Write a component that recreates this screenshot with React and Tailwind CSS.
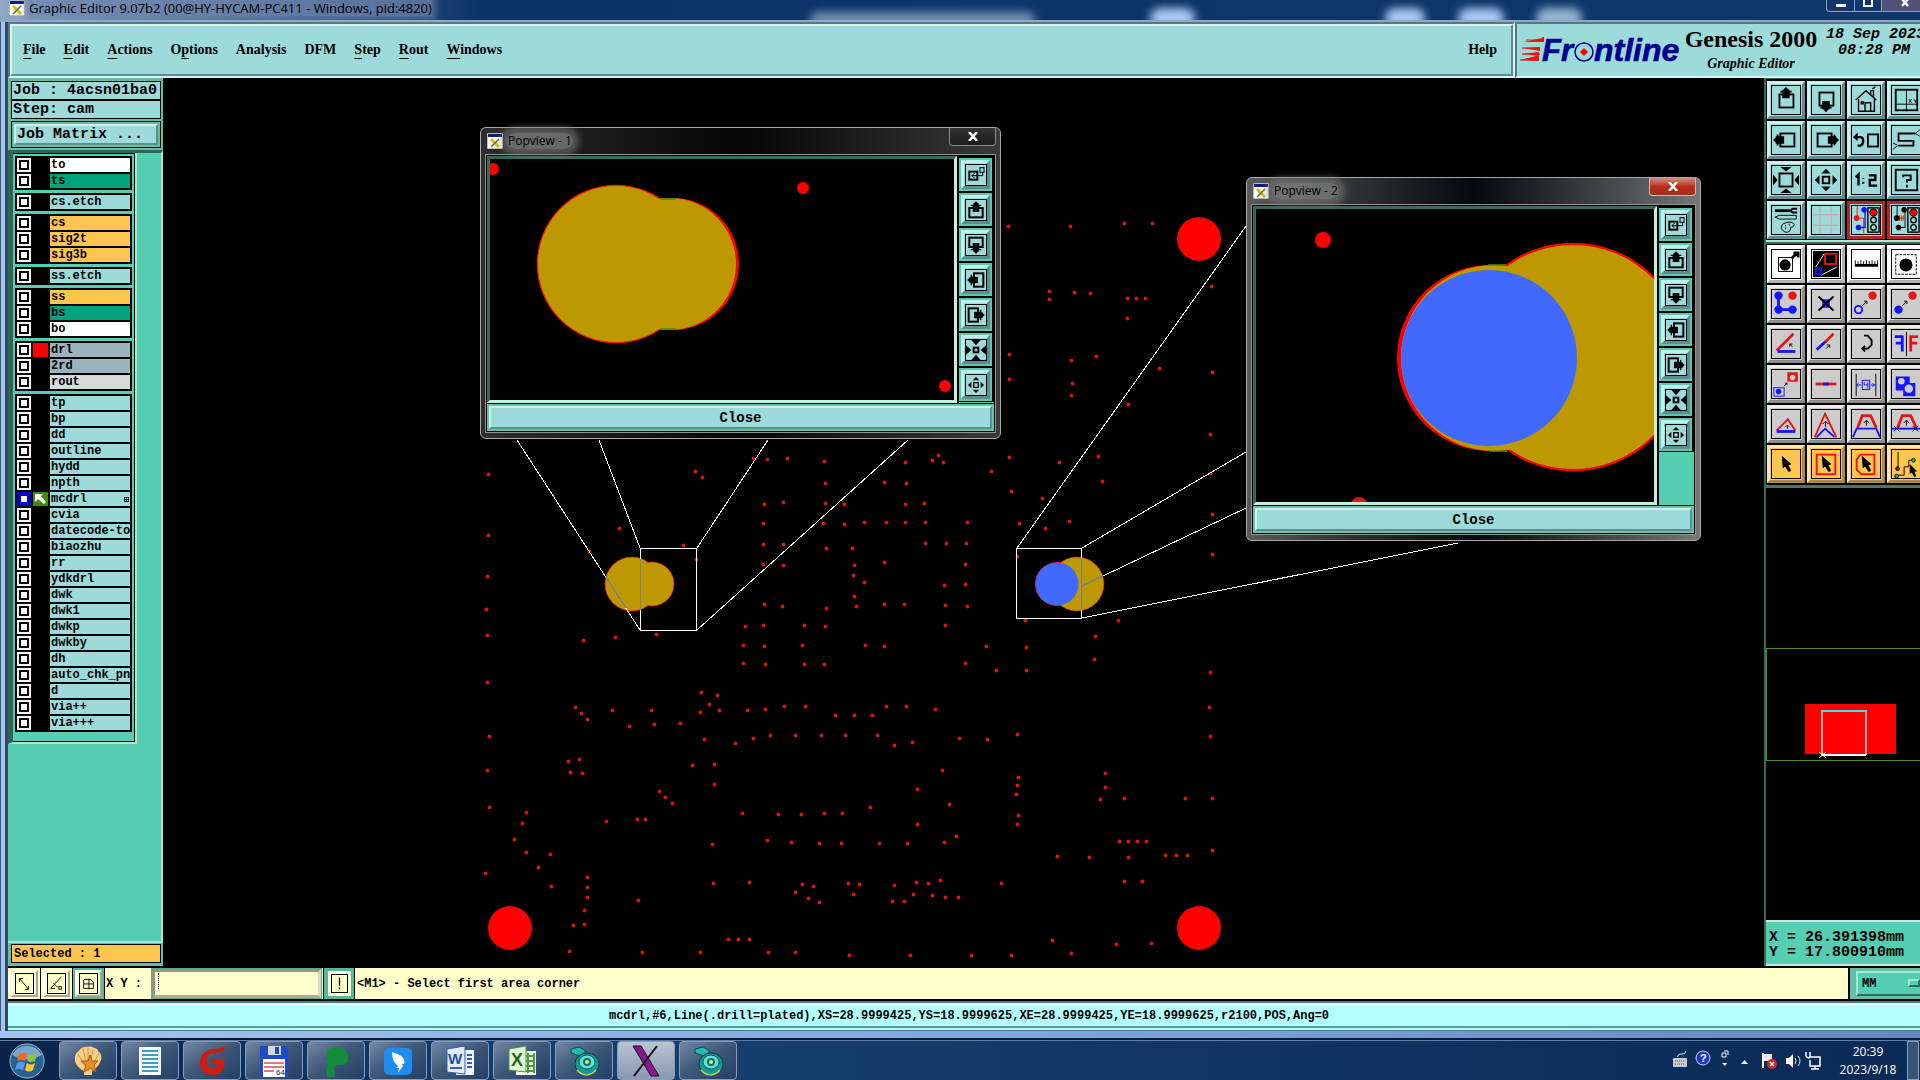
import React, { useState } from 'react'

const layerGroups = [
  [
    { name: 'to', tone: 'bg-white' },
    { name: 'ts', tone: 'bg-[#00a37c]' },
  ],
  [{ name: 'cs.etch', tone: 'bg-[#9cdbda]' }],
  [
    { name: 'cs', tone: 'bg-[#ffc64f]' },
    { name: 'sig2t', tone: 'bg-[#ffc64f]' },
    { name: 'sig3b', tone: 'bg-[#ffc64f]' },
  ],
  [{ name: 'ss.etch', tone: 'bg-[#9cdbda]' }],
  [
    { name: 'ss', tone: 'bg-[#ffc64f]' },
    { name: 'bs', tone: 'bg-[#00a37c]' },
    { name: 'bo', tone: 'bg-white' },
  ],
  [
    { name: 'drl', tone: 'bg-[#9ab4bd]', color: true },
    { name: '2rd', tone: 'bg-[#9ab4bd]' },
    { name: 'rout', tone: 'bg-[#d9d9d9]' },
  ],
  [
    'tp', 'bp', 'dd', 'outline', 'hydd', 'npth', 'mcdrl', 'cvia', 'datecode-to', 'biaozhu', 'rr',
    'ydkdrl', 'dwk', 'dwk1', 'dwkp', 'dwkby', 'dh', 'auto_chk_pnl', 'd', 'via++', 'via+++',
  ].map((name) => ({ name, tone: 'bg-[#9cdbda]', active: name === 'mcdrl' })),
]

// label plus the index of the mnemonic letter, -1 for none
const menus = [
  ['File', 0], ['Edit', 0], ['Actions', 0], ['Options', 1], ['Analysis', -1],
  ['DFM', -1], ['Step', 0], ['Rout', 0], ['Windows', 0],
]

// drill hits on the board
const drills = [
  [488, 473], [488, 533], [487, 574], [486, 606], [487, 632], [487, 678], [489, 731], [487, 764], [489, 801], [485, 865],
  [583, 636], [615, 634], [656, 631], [619, 526], [589, 549], [683, 543], [696, 557], [695, 470], [702, 476],
  [753, 458], [767, 459], [787, 458], [824, 461], [825, 482], [825, 502], [844, 503], [764, 503], [783, 501],
  [763, 522], [823, 522], [844, 523], [864, 521], [763, 542], [783, 542], [826, 546], [852, 546], [763, 562], [783, 563],
  [854, 563], [853, 573], [864, 579], [854, 593], [764, 601], [782, 603], [826, 605], [856, 603], [745, 623], [763, 622],
  [804, 622], [825, 623], [743, 641], [764, 642], [802, 641], [865, 641], [743, 659], [765, 660], [804, 660], [824, 660],
  [701, 688], [717, 690], [709, 699], [700, 707], [719, 705], [747, 705], [765, 704], [784, 701], [805, 701],
  [835, 710], [854, 710], [575, 702], [581, 708], [587, 714], [612, 705], [651, 705], [629, 721], [654, 719], [680, 718],
  [704, 734], [735, 738], [753, 733], [770, 730], [795, 730], [821, 730], [845, 730], [568, 755], [579, 753], [570, 766],
  [582, 767], [692, 759], [714, 758], [714, 778], [659, 785], [665, 791], [672, 797], [606, 814], [637, 812], [645, 812],
  [742, 806], [778, 807], [801, 807], [824, 806], [842, 806], [526, 805], [522, 816], [514, 832], [526, 845], [550, 847],
  [538, 859], [551, 878], [587, 869], [587, 879], [587, 889], [584, 902], [584, 915], [573, 916], [638, 892],
  [712, 837], [767, 833], [791, 835], [819, 836], [841, 836], [713, 875], [749, 874], [802, 876], [813, 878], [795, 884],
  [808, 890], [819, 894], [848, 875], [859, 876], [853, 886], [728, 930], [738, 930], [749, 930], [569, 942], [642, 943],
  [700, 943], [768, 943], [795, 943], [849, 946],
  [905, 462], [932, 460], [938, 455], [943, 462], [991, 470], [1009, 457], [1059, 462], [1098, 456], [1102, 480],
  [1011, 490], [1042, 497], [884, 481], [906, 482], [905, 503], [924, 502], [886, 521], [905, 521], [925, 521], [967, 521],
  [1019, 522], [1045, 526], [1069, 520], [925, 541], [946, 541], [966, 541], [884, 560], [965, 562], [944, 582], [965, 581],
  [884, 601], [904, 601], [945, 602], [967, 603], [945, 622], [884, 642], [986, 642], [1026, 643], [965, 659], [996, 666],
  [1026, 666], [1017, 554], [1025, 617], [1118, 617], [1095, 633], [1094, 655], [1210, 472], [1212, 513], [1212, 552],
  [1210, 668], [1209, 702], [1210, 731], [886, 701], [906, 701], [935, 704], [872, 710], [877, 730], [894, 740], [912, 737],
  [959, 733], [987, 734], [1017, 729], [942, 764], [917, 783], [870, 801], [949, 798], [917, 817], [1018, 771], [1017, 779],
  [1016, 788], [1018, 808], [1017, 817], [1105, 767], [1105, 781], [1100, 793], [1124, 792], [1185, 792], [1212, 792],
  [879, 836], [907, 836], [944, 835], [956, 829], [1057, 849], [1089, 850], [1119, 834], [1128, 834], [1137, 834], [1146, 834],
  [1128, 850], [1165, 848], [1176, 848], [1187, 848], [1212, 843], [1124, 873], [1142, 873], [894, 877], [916, 874],
  [928, 875], [940, 872], [913, 886], [932, 887], [945, 889], [958, 889], [892, 893], [904, 893], [1001, 875],
  [910, 946], [971, 946], [1011, 946], [1052, 931], [1071, 944], [1116, 935], [1151, 934],
  [1008, 226], [1070, 226], [1124, 223], [1152, 223], [1211, 286], [1049, 291], [1049, 299], [1074, 292], [1090, 293],
  [1127, 298], [1136, 298], [1145, 298], [1127, 318], [1009, 354], [1009, 379], [1071, 360], [1096, 356], [1072, 383],
  [1071, 395], [1159, 368], [1128, 404], [1212, 372], [1210, 434],
]

// the lower part of the board is plotted with a slightly larger pitch
const plotY = (y) => Math.round(y > 440 ? 440 + (y - 440) * 1.018 : y)

const B = '#1414ff'
const R = '#e81414'

// bold frame with an arrow leaving it, turned for the four directions
const PanArrow = ({ turn }) => (
  <g transform={turn}>
    <rect x="5" y="12" width="20" height="14" fill="none" stroke="#000" strokeWidth="3" />
    <path d="M15 2l3 3h1v2h4v2h-3v9H10V9H7V7h4V5h1z" />
  </g>
)

// 30x30 tool drawings
const icons = {
  up: (
    <g>
      <rect x="8" y="9" width="15" height="14" fill="none" stroke="#000" strokeWidth="2" />
      <path d="M15 1l3 3h1v1h2v2h-2v6h-8V7H9V5h2V4h1z" />
    </g>
  ),
  down: (
    <g>
      <rect x="8" y="7" width="15" height="14" fill="none" stroke="#000" strokeWidth="2" />
      <path d="M15 28l-3-3h-1v-1H9v-2h2v-6h8v6h2v2h-2v1h-1z" />
    </g>
  ),
  left: (
    <g>
      <rect x="9" y="8" width="15" height="14" fill="none" stroke="#000" strokeWidth="2" />
      <path d="M1 15l3-3v-1h1V9h2v2h6v8H7v2H5v-2H4v-1z" />
    </g>
  ),
  right: (
    <g>
      <rect x="6" y="8" width="15" height="14" fill="none" stroke="#000" strokeWidth="2" />
      <path d="M29 15l-3-3v-1h-1V9h-2v2h-6v8h6v2h2v-2h1v-1z" />
    </g>
  ),
  panUp: <PanArrow />,
  panDown: <PanArrow turn="rotate(180 15 15)" />,
  panLeft: <PanArrow turn="rotate(-90 15 15)" />,
  panRight: <PanArrow turn="rotate(90 15 15)" />,
  home: (
    <path d="M4 15L15 5l11 10M7 14v13h17V14M14 27v-9h6v9M10 17h2v2h-2zM20 9V5h3v7M22 3l3-2" fill="none" stroke="#000" strokeWidth="1.5" />
  ),
  panes: (
    <g>
      <rect x="4" y="4" width="23" height="22" fill="none" stroke="#000" strokeWidth="2" />
      <path d="M15.500 4v22M4 19.500h23" stroke="#000" />
      <path d="M18 14l3 4m0-4l-3 4M23 14l2 2 2-2m-2 2v2" stroke="#000" fill="none" />
    </g>
  ),
  undo: (
    <g>
      <rect x="17" y="9" width="11" height="13" fill="none" stroke="#000" strokeWidth="2" />
      <path d="M3 12h6q3 0 3 4t-3 5H6" fill="none" stroke="#000" strokeWidth="2.500" />
      <path d="M1 12l5-5v9z" />
    </g>
  ),
  snake: (
    <g fill="none" stroke="#000">
      <path d="M6 21h17v-5H7V8h18" strokeWidth="2" />
      <path d="M1 18l5 3-5 4M30 4l-5 4 5 3" />
    </g>
  ),
  zoomout: (
    <g>
      <rect x="8" y="8" width="14" height="14" fill="none" stroke="#000" strokeWidth="2" />
      <path d="M9 1h12l-6 5zM9 29h12l-6-5zM1 9v12l5-6zM29 9v12l-5-6z" />
    </g>
  ),
  zoomin: (
    <g>
      <rect x="11.500" y="11.500" width="7" height="7" fill="none" stroke="#000" strokeWidth="2" />
      <path d="M15 3l5 5H10zM15 27l5-5H10zM3 15l5-5v10zM27 15l-5-5v10z" />
    </g>
  ),
  squeeze: (
    <g>
      <rect x="11.500" y="11.500" width="7" height="7" fill="none" stroke="#000" strokeWidth="3" />
      <path d="M8 0h14l-7 8zM8 30h14l-7-8zM0 8v14l8-7zM30 8v14l-8-7z" />
    </g>
  ),
  detach: (
    <g fill="none" stroke="#000">
      <rect x="5" y="10" width="12" height="12" strokeWidth="3" />
      <rect x="21" y="4" width="6" height="7" strokeWidth="1.500" />
      <path d="M25 11v5H9m4-4l-4 4 4 4" strokeWidth="1.500" />
    </g>
  ),
  ratio: <path d="M4 12l3-3v12M12 13v1m0 3v2M18 10h7v5h-6v6h8" fill="none" stroke="#000" strokeWidth="2.500" />,
  help: (
    <g fill="none" stroke="#000" strokeWidth="2">
      <rect x="4" y="4" width="23" height="22" />
      <path d="M12 12v-2h8v5h-4v3M16 20v3" />
    </g>
  ),
  tools: (
    <g fill="none" stroke="#000">
      <path d="M3 5h17" strokeWidth="3" />
      <path d="M27 3h-5l-2 2 2 2h5" strokeWidth="2" />
      <path d="M3 12l5-2h18v4H8z" />
      <path d="M12 19q9-4 12 1-1 3-4 3 0 6-6 5-7-4-2-9z" />
      <path d="M14 21h1m3-1h1m-5 4h1" strokeWidth="2" />
    </g>
  ),
  grid: <path d="M8.500 1v28M20.500 1v28M1 9.500h28M1 20.500h28" stroke="#d69ba6" fill="none" />,
  netOn: (
    <g>
      <path d="M5.500 0v13h7V29" stroke={R} fill="none" />
      <path d="M14 4v19H8" stroke={B} fill="none" strokeWidth="1.500" />
      <circle cx="5" cy="13" r="3" fill={R} /><circle cx="13" cy="4" r="3" fill={B} /><circle cx="7" cy="23" r="3" fill={B} />
      <rect x="17" y="2" width="12" height="26" fill="none" stroke="#000" strokeWidth="1.500" />
      <circle cx="23" cy="7" r="4" fill="#f00" stroke="#000" /><circle cx="23" cy="15" r="3" fill="none" stroke="#000" strokeWidth="1.500" />
      <circle cx="23" cy="23" r="3" fill="none" stroke="#000" strokeWidth="1.500" />
    </g>
  ),
  netOff: (
    <g>
      <path d="M5.500 0v13M14 4v19H8" stroke="#000" fill="none" />
      <path d="M6 13h7m-5-3v6m2-6v6m2-6v6" stroke={R} fill="none" />
      <circle cx="5" cy="13" r="3" /><circle cx="13" cy="4" r="3" /><circle cx="7" cy="23" r="3" />
      <rect x="17" y="2" width="12" height="26" fill="none" stroke="#000" strokeWidth="1.500" />
      <circle cx="23" cy="7" r="4" fill="#f00" stroke="#000" /><circle cx="23" cy="15" r="3" fill="none" stroke="#000" strokeWidth="1.500" />
      <circle cx="23" cy="23" r="3" fill="none" stroke="#000" strokeWidth="1.500" />
    </g>
  ),
  pick: (
    <g>
      <rect x="7" y="8" width="15" height="15" fill="none" stroke="#000" />
      <circle cx="14" cy="16" r="6" />
      <path d="M21 9l5-5m-3-1h5v5" stroke="#000" fill="none" strokeWidth="3" />
    </g>
  ),
  popview: (
    <g>
      <rect x="1" y="1" width="28" height="28" />
      <path d="M4 18L13 4M10 27l17-9" stroke="#fff" />
      <rect x="14" y="4" width="12" height="11" fill="none" stroke="#f01414" strokeWidth="2" />
      <rect x="4" y="20" width="6" height="6" fill="none" stroke={B} strokeWidth="2" />
    </g>
  ),
  ruler: <path d="M3 18h25v-7h-1v4h-2v-3h-1v3h-2v-4h-1v4h-2v-3h-1v3h-2v-4h-1v4h-2v-3h-1v3h-2v-4H9v4H7v-3H6v3H4v-4H3z" />,
  dashedPad: (
    <g>
      <rect x="4" y="5" width="22" height="21" fill="none" stroke="#000" strokeDasharray="3 1" />
      <circle cx="15" cy="16" r="7" />
    </g>
  ),
  links: (
    <g>
      <path d="M7 6v15h15" stroke={B} strokeWidth="3" fill="none" />
      <circle cx="7" cy="6" r="4.500" fill={B} /><circle cx="7" cy="21" r="4.500" fill={B} /><circle cx="22" cy="21" r="4.500" fill={B} />
      <circle cx="22" cy="6" r="4.500" fill={R} />
    </g>
  ),
  cross: (
    <g>
      <rect x="11" y="10" width="8" height="9" fill={B} />
      <path d="M7 7l16 15M23 7L7 22" stroke="#000" strokeWidth="2" />
    </g>
  ),
  copyPad: (
    <g>
      <circle cx="7" cy="21" r="4" fill="none" stroke={B} strokeWidth="2" /><circle cx="22" cy="6" r="4.500" fill={R} />
      <path d="M11 17l5-5m-3 0h3v3" stroke="#000" fill="none" />
    </g>
  ),
  movePad: (
    <g>
      <circle cx="7" cy="21" r="4.500" fill={B} /><circle cx="22" cy="6" r="4.500" fill={R} />
      <path d="M11 17l5-5m-3 0h3v3" stroke="#000" fill="none" />
    </g>
  ),
  angle: (
    <g fill="none">
      <path d="M5 22L23 4" stroke={R} strokeWidth="3" /><path d="M6 23h19" stroke={B} strokeWidth="3" />
      <path d="M22 18l-3-3m0 3v-3h3" stroke="#000" />
    </g>
  ),
  extend: (
    <g fill="none">
      <path d="M5 21L15 12" stroke={B} strokeWidth="3" /><path d="M14 13l9-9" stroke={R} strokeWidth="3" />
      <path d="M15 20l4-4m-3 0h3v3" stroke="#000" />
    </g>
  ),
  rotate: <path d="M13 6h4l4 5v5l-4 4h-6m3-3l-3 3 3 3" stroke="#000" strokeWidth="2" fill="none" />,
  mirror: (
    <g fill="none">
      <path d="M3 7h8v16M4 14h7" stroke={B} strokeWidth="3" /><path d="M15.500 2v26" stroke="#000" />
      <path d="M28 7h-8v16M27 14h-7" stroke={R} strokeWidth="3" />
    </g>
  ),
  swap: (
    <g fill="none">
      <rect x="2" y="19" width="11" height="9" stroke={B} /><circle cx="7" cy="23" r="3" fill={B} />
      <rect x="17" y="3" width="10" height="9" fill={R} stroke={R} /><circle cx="22" cy="8" r="3" fill="#ccc" />
      <path d="M13 17l3-3m-2 0h2v2" stroke="#000" />
    </g>
  ),
  bar: (
    <g>
      <path d="M4 15h22" stroke={R} strokeWidth="3" /><path d="M12 15h6" stroke={B} strokeWidth="3" />
    </g>
  ),
  dimension: (
    <g fill="none">
      <path d="M4.500 4v24M25.500 4v24" stroke="#000" />
      <path d="M5 16h5m-3-2l-2 2 2 2M20 16h5m-3-2l2 2-2 2M13 13v3h4v4m0-7v3" stroke={B} />
      <rect x="11" y="11" width="8" height="10" stroke={B} />
    </g>
  ),
  gears: (
    <g fill={B}>
      <path d="M4 7h15v7h6v14H12v-6H4z" />
      <circle cx="10" cy="12" r="3.500" fill="#ccc" /><circle cx="18" cy="20" r="4.500" fill="#ccc" />
    </g>
  ),
  tri: (
    <g fill="none">
      <path d="M5 22L17 10l8 12" stroke={R} strokeWidth="2" /><path d="M5 23h20" stroke={B} strokeWidth="3" />
      <path d="M16.500 20v-4m-2 2l2-2 2 2" stroke="#000" />
    </g>
  ),
  peak: (
    <g fill="none">
      <path d="M3 29L14 4l12 25" stroke={R} strokeWidth="2" /><path d="M5 29l9-9 10 9" stroke={B} strokeWidth="2" />
      <path d="M14.500 18v-6m-3 3l3-3 3 3" stroke="#000" />
    </g>
  ),
  trap: (
    <g fill="none">
      <path d="M6 19l5-13h9l6 13" stroke={R} strokeWidth="3" /><path d="M1 29l4-9h21l4 9" stroke={B} strokeWidth="2" />
      <path d="M15.500 17v-6m-3 3l3-3 3 3" stroke="#000" />
    </g>
  ),
  trapCut: (
    <g fill="none">
      <path d="M6 19l5-13h9l6 13" stroke={R} strokeWidth="3" /><path d="M0 20h30" stroke={B} strokeWidth="2" />
      <path d="M15.500 17v-6m-3 3l3-3 3 3M2 17l6 6m0-6l-6 6M22 17l6 6m0-6l-6 6" stroke="#000" />
    </g>
  ),
  select: <path d="M11 7l9 8-3 1 3 6-2 1-4-6-2 2z" stroke="#000" />,
  selectBox: (
    <g>
      <rect x="5" y="5" width="20" height="21" fill="none" stroke={R} strokeWidth="2" />
      <path d="M11 7l9 8-3 1 3 6-2 1-4-6-2 2z" stroke="#000" />
    </g>
  ),
  selectPoly: (
    <g>
      <path d="M9 5h15v21H10l-5-5V10z" fill="none" stroke={R} strokeWidth="2" />
      <path d="M11 7l9 8-3 1 3 6-2 1-4-6-2 2z" stroke="#000" />
    </g>
  ),
  selectNet: (
    <g>
      <path d="M6.500 2v18M6 27h7v-9h5V11h5" fill="none" stroke="#000" />
      <circle cx="6" cy="20" r="2" fill="#b01010" stroke="#000" /><circle cx="5" cy="28" r="2" fill="#1fd01f" stroke="#000" />
      <circle cx="23" cy="11" r="2" fill="#1fd01f" stroke="#000" />
      <path d="M19 15l8 8h-3l2 5-2 1-3-5-2 2z" />
    </g>
  ),
}

const tones = {
  cyan: 'bg-[#9cdbda] border-t-[#cdf0ee] border-l-[#cdf0ee] border-r-[#5c8d90] border-b-[#5c8d90]',
  red: 'bg-[#9cdbda] border-[#b22428]',
  white: 'bg-white border-t-white border-l-white border-r-[#b4b4b4] border-b-[#b4b4b4]',
  gray: 'bg-[#cccccc] border-t-[#ececec] border-l-[#ececec] border-r-[#8c8c8c] border-b-[#8c8c8c]',
  orange: 'bg-[#ffc64f] border-t-[#ffe6b0] border-l-[#ffe6b0] border-r-[#b08a3c] border-b-[#b08a3c]',
}

const viewTools = [
  ['up', 'cyan'], ['down', 'cyan'], ['home', 'cyan'], ['panes', 'cyan'],
  ['left', 'cyan'], ['right', 'cyan'], ['undo', 'cyan'], ['snake', 'cyan'],
  ['zoomout', 'cyan'], ['zoomin', 'cyan'], ['ratio', 'cyan'], ['help', 'cyan'],
  ['tools', 'cyan'], ['grid', 'cyan'], ['netOn', 'red'], ['netOff', 'red'],
]

const editTools = [
  ['pick', 'white'], ['popview', 'white'], ['ruler', 'white'], ['dashedPad', 'white'],
  ['links', 'gray'], ['cross', 'gray'], ['copyPad', 'gray'], ['movePad', 'gray'],
  ['angle', 'gray'], ['extend', 'gray'], ['rotate', 'gray'], ['mirror', 'gray'],
  ['swap', 'gray'], ['bar', 'gray'], ['dimension', 'gray'], ['gears', 'gray'],
  ['tri', 'gray'], ['peak', 'gray'], ['trap', 'gray'], ['trapCut', 'gray'],
  ['select', 'orange'], ['selectBox', 'orange'], ['selectPoly', 'orange'], ['selectNet', 'orange'],
]

const ToolGrid = ({ tools }) => (
  <div className="grid grid-cols-[repeat(4,38px)] gap-[2px]">
    {tools.map(([name, tone]) => (
      <button
        key={name}
        type="button"
        aria-label={name}
        className={`flex h-[38px] w-[38px] items-center justify-center border-3 ${tones[tone]}`}
      >
        <svg viewBox="0 0 30 30" className="h-[30px] w-[30px] shrink-0 border border-black">
          {icons[name]}
        </svg>
      </button>
    ))}
  </div>
)

const XIcon = () => (
  <svg viewBox="0 0 16 16" className="h-4 w-4 shrink-0">
    <rect width="16" height="16" fill="#fff" stroke="#777" />
    <rect x="1" y="1" width="14" height="3" fill="#101a80" />
    <path d="M4 6l8 8" stroke="#c9c21a" strokeWidth="3" />
    <path d="M12 6l-8 8" stroke="#6b6b20" strokeWidth="1.500" />
  </svg>
)

const popTools = ['detach', 'panUp', 'panDown', 'panLeft', 'panRight', 'squeeze', 'zoomin']

const Popview = ({ title, className, frame, closeStyle, viewBox, children }) => (
  <section
    className={`absolute flex flex-col rounded-md border border-[#a8a8a8] px-1 pb-[5px] ${frame} ${className}`}
    aria-label={title}
  >
    <header className="relative flex h-[26px] items-center gap-1 pl-[2px] font-['Open_Sans',sans-serif] text-xs text-black">
      <XIcon />
      <span className="rounded-full bg-[#7b7b7b]/80 px-px shadow-[0_0_6px_6px_rgba(123,123,123,0.6)]">
        {title}
      </span>
      <button
        type="button"
        aria-label={`Close ${title}`}
        className={`absolute top-0 right-0 flex h-[18px] w-[47px] items-center justify-center rounded-b border border-t-0 ${closeStyle}`}
      >
        <svg viewBox="0 0 10 9" className="h-[9px] w-[10px]">
          <path d="M1 0l8 9M9 0L1 9" stroke="#fff" strokeWidth="2.500" />
        </svg>
      </button>
    </header>
    <div className="flex flex-1 flex-col gap-px border border-[#8c9494] bg-black p-px">
      <div className="flex flex-1 gap-[2px]">
        <div className="min-w-0 flex-1 border-3 border-t-[#356a60] border-r-[#c4efe2] border-b-[#c4efe2] border-l-[#356a60]">
          <svg viewBox={viewBox} className="block h-full w-full">
            {children}
          </svg>
        </div>
        <div className="flex w-[35px] flex-col bg-[#55ceb1]">
          <div className="flex flex-col gap-[2px] bg-black pt-[2px] pb-px">
            {popTools.map((name) => (
              <button
                key={name}
                type="button"
                aria-label={name}
                className="flex h-[33px] w-[33px] items-center justify-center border-2 border-[#62c4ab] bg-[#9cdbda]"
              >
                <span className="flex h-[29px] w-[29px] items-center justify-center border-3 border-t-[#b8f5ee] border-r-[#5c8d90] border-b-[#5c8d90] border-l-[#b8f5ee]">
                  <svg viewBox="0 0 30 30" className="h-[22px] w-[22px] shrink-0 border border-black">
                    {icons[name]}
                  </svg>
                </span>
              </button>
            ))}
          </div>
        </div>
      </div>
      <button
        type="button"
        className="h-[27px] border-2 border-[#62c4ab] bg-[#9cdbda] font-['Liberation_Mono',monospace] text-sm font-bold text-black"
      >
        <span className="flex h-[23px] items-center justify-center border-2 border-t-[#cdf0ee] border-r-[#5c8d90] border-b-[#5c8d90] border-l-[#cdf0ee]">
          Close
        </span>
      </button>
    </div>
  </section>
)

const Workspace = () => (
  <main className="relative min-w-0 flex-1 overflow-hidden bg-black">
    <svg viewBox="163 78 1601 888" className="block h-full w-full">
      {[[1199, 239], [510, 928], [1199, 928]].map(([x, y]) => (
        <circle key={`${x}-${y}`} cx={x} cy={y} r="22" fill="#ff0000" />
      ))}
      {drills.map(([x, y]) => (
        <circle key={`${x}-${y}`} cx={x + 0.5} cy={plotY(y) + 0.5} r="1.9" fill="#dc1414" />
      ))}

      <circle cx="632" cy="584" r="27" fill="#bd9800" stroke="#ff1800" strokeWidth="0.7" />
      <circle cx="652" cy="584" r="22" fill="#bd9800" stroke="#ff1800" strokeWidth="0.7" />
      <circle cx="632" cy="584" r="26" fill="#bd9800" />
      <circle cx="1057" cy="584" r="22" fill="#ff0000" />
      <circle cx="1077" cy="584" r="27" fill="#bd9800" stroke="#ff1800" strokeWidth="0.5" />
      <circle cx="1057" cy="584" r="21.500" fill="#4169ff" />

      <g fill="none" stroke="#fff" shapeRendering="crispEdges">
        <rect x="640.5" y="548.5" width="56" height="82" />
        <path d="M517 440L640 630M599 440L640 548M768 440L697 548M908 440L697 630" />
        <rect x="1016.5" y="548.5" width="65" height="70" />
        <path d="M1017 548L1246 226M1082 548L1246 452M1082 586L1246 508M1082 618L1458 543" />
      </g>
      {/* the wires turn gray where they cross copper */}
      <g fill="none" stroke="#7d8088" strokeWidth="1.500" shapeRendering="crispEdges">
        <path d="M640.500 559v51M606 577l20 31M1081.500 558v52M1082 586l21-10" />
      </g>
    </svg>

    <Popview
      title="Popview - 1"
      className="top-[49px] left-[317px] h-[312px] w-[521px]"
      frame="bg-linear-to-r from-[#2e2e2e] via-[#060606] to-[#3a3a3a]"
      closeStyle="border-[#8a8a8a] bg-linear-to-b from-[#333333] to-[#1c1c1c]"
      viewBox="490 159 464 241"
    >
      <circle cx="493" cy="169" r="6" fill="#ff0000" />
      <circle cx="803" cy="188" r="6" fill="#ff0000" />
      <circle cx="945" cy="386" r="6" fill="#ff0000" />
      <circle cx="673" cy="264" r="66" fill="#ff0000" />
      <circle cx="616" cy="264" r="78.500" fill="#bd9800" stroke="#f01800" strokeWidth="1.500" />
      <circle cx="670" cy="264" r="66" fill="#bd9800" />
      <circle cx="616" cy="264" r="78" fill="#bd9800" />
      <path d="M661 199h15M660 329h16" stroke="#3c8c00" strokeWidth="1.500" />
    </Popview>

    <Popview
      title="Popview - 2"
      className="top-[99px] left-[1083px] h-[364px] w-[455px]"
      frame="bg-linear-to-r from-[#5a5a5a] via-[#060a10] to-[#777777]"
      closeStyle="border-[#e0b0a8] bg-linear-to-b from-[#d08a80] via-[#b82c18] to-[#a03020]"
      viewBox="1256 209 398 293"
    >
      <circle cx="1323" cy="240" r="8" fill="#ff0000" />
      <circle cx="1359" cy="505" r="8" fill="#dc1414" />
      <circle cx="1490" cy="358" r="93" fill="#ff0000" />
      <circle cx="1573" cy="357" r="113" fill="#bd9800" stroke="#ff0000" strokeWidth="2.500" />
      <circle cx="1494" cy="358" r="93" fill="#bd9800" />
      <circle cx="1573" cy="357" r="112" fill="#bd9800" />
      <path d="M1488 265h18M1489 451h18" stroke="#5c9000" strokeWidth="1.500" />
      <circle cx="1489" cy="358" r="88" fill="#4169ff" />
    </Popview>
  </main>
)

const LayerRow = ({ layer }) => (
  <div className="flex h-4 items-center gap-px">
    <input
      id={`layer-${layer.name}`}
      type="checkbox"
      className={
        layer.active
          ? 'h-[14px] w-[14px] shrink-0 appearance-none border-4 border-[#0000c8] bg-white'
          : 'h-[14px] w-[14px] shrink-0 appearance-none border-2 border-white bg-white shadow-[inset_0_0_0_2px_#000]'
      }
    />
    <span className={`ml-px h-[14px] w-[15px] shrink-0 ${layer.color ? 'bg-[#ff0000]' : layer.active ? 'bg-[#3f8a10]' : 'bg-black'}`}>
      {layer.active && (
        <svg viewBox="0 0 14 14" className="h-[14px] w-[14px]">
          <path d="M2 2h8L8 4l5 6-2 2-6-5-3 3z" fill="#fff" />
        </svg>
      )}
    </span>
    <label
      htmlFor={`layer-${layer.name}`}
      className={`ml-px flex h-[14px] min-w-0 flex-1 items-center justify-between overflow-hidden pl-px font-['Liberation_Mono',monospace] text-xs leading-[14px] font-bold whitespace-nowrap ${layer.tone}`}
    >
      {layer.name}
      {layer.active && (
        <svg viewBox="0 0 5 5" className="mr-px h-[5px] w-[5px] shrink-0">
          <path d="M0 .5h5M0 2.500h5M0 4.500h5M.5 0v5M2.500 0v5M4.500 0v5" stroke="#000" strokeWidth="0.8" />
        </svg>
      )}
    </label>
  </div>
)

const LeftPanel = () => (
  <aside className="flex w-[155px] shrink-0 flex-col bg-[#62bfa5] font-['Liberation_Mono',monospace] font-bold text-black">
    <div className="flex flex-col pt-[3px] pr-[2px] pb-[2px] pl-[3px] text-[15px] leading-[17px]">
      <div className="flex h-[19px] items-end border border-black bg-[#9cdbda] pl-px whitespace-pre">Job : 4acsn01ba0</div>
      <div className="flex h-[19px] items-end border border-black bg-[#9cdbda] pl-px whitespace-pre">Step: cam</div>
      <div className="mt-[2px] border border-black p-[2px]">
        <button type="button" className="flex h-[21px] w-full items-center border-2 border-t-[#cdf0ee] border-r-[#5c8d90] border-b-[#5c8d90] border-l-[#cdf0ee] bg-[#9cdbda] pl-px">
          Job Matrix ...
        </button>
      </div>
    </div>
    <div className="flex-1 border-t-3 border-r-2 border-b-2 border-t-[#2f6358] border-r-[#a5e8d4] border-b-[#a5e8d4] bg-[#55ceb1]">
      <div className="w-[129px] border-r-2 border-b-2 border-l-[5px] border-r-[#a5e8d4] border-b-[#a5e8d4] border-l-[#2f6358]">
        <div className="flex flex-col gap-[3px] border-t border-r border-b border-black pt-[2px] pr-[2px] pb-[9px] pl-[2px]">
          {layerGroups.map((group) => (
            <div key={group[0].name} className="bg-black px-[2px] py-px">
              {group.map((layer) => (
                <LayerRow key={layer.name} layer={layer} />
              ))}
            </div>
          ))}
        </div>
      </div>
    </div>
    <div className="pt-px pr-[2px] pb-[3px] pl-[3px]">
      <div className="flex h-[19px] items-center border border-black bg-[#ffc64f] pl-[2px] text-xs whitespace-pre">Selected : 1</div>
    </div>
  </aside>
)

const RightPanel = () => (
  <aside className="flex w-[156px] shrink-0 flex-col overflow-hidden border-l-2 border-[#356a60] bg-black">
    <div className="border-t border-[#2f6358] pt-[2px] pl-px">
      <ToolGrid tools={viewTools} />
    </div>
    <div className="mt-px h-[2px] shrink-0 bg-[#a5e8d4]" />
    <div className="border-t-2 border-[#5a5a5a] pt-px pl-px">
      <ToolGrid tools={editTools} />
    </div>
    <div className="mt-[2px] h-[3px] shrink-0 bg-[#557068]" />
    <div className="min-h-0 flex-1">
      <svg viewBox="1766 488 154 432" className="block h-full w-full">
        <rect x="1766.5" y="648.5" width="170" height="112" fill="none" stroke="#4f8a1e" />
        <rect x="1805" y="704" width="91" height="50" fill="#ff0000" />
        <path d="M1822 755v-44M1866 755v-44" stroke="#aaa" strokeWidth="2" />
        <path d="M1821 711h46" stroke="#40e0e0" strokeWidth="2" />
        <path d="M1822 755h44" stroke="#fff" strokeWidth="2" />
        <path d="M1819 752l7 6M1826 752l-7 6" stroke="#fff" />
      </svg>
    </div>
    <div className="h-[46px] shrink-0 border-t-2 border-b-2 border-[#b8eedf] bg-[#55ceb1] pt-2 pl-[3px] font-['Liberation_Mono',monospace] text-[15px] leading-[15px] font-bold whitespace-pre">
      <div>X = 26.391398mm</div>
      <div>Y = 17.800910mm</div>
    </div>
  </aside>
)

const Header = () => (
  <div className="flex h-[56px] shrink-0 bg-[#9cdbda] font-['Liberation_Serif',serif] text-sm font-bold text-black">
    <div className="flex-1 border-2 border-t-[#56787e] border-r-[#d8f5f3] border-b-[#d8f5f3] border-l-[#56787e]">
      <nav className="flex h-full items-center gap-[18px] border-2 border-t-[#d8f5f3] border-r-[#5c8d90] border-b-[#5c8d90] border-l-[#d8f5f3] pr-[14px] pl-[11px]">
        {menus.map(([name, key]) => (
          <button key={name} type="button" className="whitespace-nowrap">
            {key < 0 ? name : (
              <>
                {name.slice(0, key)}
                <span className="underline underline-offset-4">{name[key]}</span>
                {name.slice(key + 1)}
              </>
            )}
          </button>
        ))}
        <button type="button" className="ml-auto">Help</button>
      </nav>
    </div>
    <div className="flex w-[405px] shrink-0 overflow-hidden border-y-2 border-l-2 border-t-[#56787e] border-b-[#d8f5f3] border-l-[#56787e] pl-[3px]">
      <svg viewBox="0 0 162 52" className="h-[52px] w-[162px] shrink-0">
        <g fill="#e81414">
          <path d="M4 18l18-4v-1h-4 6v5zM2 24l18-1 0 4zM2 30l17-2v4zM0 36l16-4h3v5z" />
          <path d="M6 16h17M2 24h18M2 30h18M0 36h18" stroke="#e81414" fill="none" />
        </g>
        <text x="22" y="37" fontFamily="Liberation Sans, Arial, sans-serif" fontWeight="bold" fontStyle="italic" fontSize="31" fill="#000090" stroke="#000090" strokeWidth="0.6">Fr</text>
        <circle cx="64" cy="28" r="9" fill="none" stroke="#000090" strokeWidth="1.500" />
        <path d="M64 24l4 4-4 4-4-4z" fill="#f00" />
        <text x="74" y="37" fontFamily="Liberation Sans, Arial, sans-serif" fontWeight="bold" fontStyle="italic" fontSize="32" fill="#000090" stroke="#000090" strokeWidth="0.6">ntline</text>
      </svg>
      <div className="flex w-[138px] shrink-0 flex-col items-center">
        <div className="text-2xl leading-[30px] whitespace-nowrap">Genesis 2000</div>
        <div className="text-sm leading-5 italic">Graphic Editor</div>
      </div>
      <div className="shrink-0 pt-[3px] pl-[6px] font-['Liberation_Mono',monospace] text-[15px] leading-4 whitespace-pre italic">
        <div>18 Sep 2023</div>
        <div className="pl-3">08:28 PM</div>
      </div>
    </div>
  </div>
)

const TitleBar = () => (
  <header className="relative flex h-[22px] shrink-0 items-start overflow-hidden border-b-2 border-[#8fa9cc] bg-linear-to-r from-[#8fa6c6] via-[#0d3468] via-25% to-[#10376b] pl-[9px]">
    <div className="absolute -bottom-2 left-[810px] h-4 w-[225px] rounded-full bg-[#9db2cf] opacity-70 blur-xs" />
    <div className="absolute -bottom-2 left-[1150px] h-5 w-[45px] rounded-full bg-[#a9c6ef] blur-xs" />
    <div className="absolute -bottom-2 left-[1385px] h-5 w-[40px] rounded-full bg-[#a9c6ef] blur-xs" />
    <div className="absolute -bottom-2 left-[1458px] h-5 w-[46px] rounded-full bg-[#a9c6ef] blur-xs" />
    <div className="absolute -bottom-2 left-[1536px] h-5 w-[46px] rounded-full bg-[#93b6cf] blur-xs" />
    <XIcon />
    <h1 className="relative ml-1 bg-[#6f86ac]/70 font-['Open_Sans',sans-serif] text-[13px] leading-4 whitespace-nowrap text-black shadow-[0_0_6px_4px_rgba(111,134,172,0.6)]">
      Graphic Editor 9.07b2 (00@HY-HYCAM-PC411 - Windows, pid:4820)
    </h1>
    <div className="relative ml-auto flex h-3 text-white">
      <button type="button" aria-label="Minimize" className="flex w-[29px] items-center justify-center rounded-bl border border-t-0 border-[#8ea2bd]">
        <svg viewBox="0 0 10 4" className="h-1 w-[10px]"><rect width="10" height="3" fill="#fff" /></svg>
      </button>
      <button type="button" aria-label="Maximize" className="flex w-[27px] items-start justify-center border-r border-b border-[#8ea2bd]">
        <svg viewBox="0 0 10 7" className="h-[7px] w-[10px]"><path d="M1 0v6h8V0" fill="none" stroke="#fff" strokeWidth="2" /></svg>
      </button>
      <button type="button" aria-label="Close" className="flex w-[38px] items-start justify-center border-b border-[#8ea2bd] bg-[#7f5f80]/60 pl-2">
        <svg viewBox="0 0 10 7" className="h-[7px] w-[10px]"><path d="M2 6l6-7M8 6L2-1" stroke="#fff" strokeWidth="2.500" /></svg>
      </button>
    </div>
  </header>
)

const CommandBar = () => {
  const [xy, setXy] = useState('')
  const modes = [
    ['Snap line', 'M4 5l10 12M4 5h4M4 5v4M14 17v-4M14 17h-4'],
    ['Snap angle', 'M3 16L15 3M3 16h5m-2-6l5 5m1-1h3v3h-3z'],
    ['Snap grid', 'M5 6h7l3 3v7H4V7zM10 5v12M4 11h11'],
  ]
  return (
    <form
      className="flex h-[35px] shrink-0 items-stretch border-y-2 border-black bg-[#ffffcc] pl-px font-['Liberation_Mono',monospace] text-xs font-bold text-black"
      onSubmit={(e) => e.preventDefault()}
    >
      {modes.map(([name, path], i) => (
        <button
          key={name}
          type="button"
          aria-label={name}
          className={`flex w-8 items-center justify-center border-r border-black ${i === 2 ? 'bg-[#55b89e]' : ''}`}
        >
          <span className="flex h-[27px] w-[27px] items-center justify-center border-2 border-t-[#fffff0] border-r-[#a8a888] border-b-[#a8a888] border-l-[#fffff0] bg-[#ffffcc]">
            <svg viewBox="0 0 19 21" className="h-[21px] w-[19px] shrink-0 border border-black">
              <path d={path} fill="none" stroke="#000" />
            </svg>
          </span>
        </button>
      ))}
      <label htmlFor="xy" className="flex w-[47px] items-center pl-px whitespace-pre">X Y :</label>
      <div className="relative my-px flex outline outline-[#5fa890]">
        <input
          id="xy"
          value={xy}
          onChange={(e) => setXy(e.target.value)}
          className="w-[169px] border-3 border-t-[#96967c] border-r-[#dcdcb4] border-b-[#b0b090] border-l-[#96967c] bg-[#ffffcc] px-1"
        />
        <span className="pointer-events-none absolute top-[4px] left-[6px] h-4 border-l border-dotted border-black" />
      </div>
      <button type="submit" aria-label="Enter" className="ml-[2px] flex w-8 items-center justify-center border-x border-black bg-[#55b89e]">
        <span className="flex h-[25px] w-[23px] items-center justify-center bg-[#ffffcc]">
          <svg viewBox="0 0 17 19" className="h-[19px] w-[17px] border border-black">
            <path d="M8.500 3v9M8.500 14v2" stroke="#000" strokeWidth="1.500" />
          </svg>
        </span>
      </button>
      <output className="flex flex-1 items-center pl-[2px] whitespace-pre">&lt;M1&gt; - Select first area corner</output>
      <div className="relative w-[72px] shrink-0 overflow-hidden border-l-2 border-black bg-[#62bfa5] py-[3px] pl-[6px]">
        <select aria-label="Units" className="h-full w-full appearance-none border-2 border-r-0 border-t-[#a5e8d4] border-b-[#27705e] border-l-[#a5e8d4] bg-[#55ceb1] pl-1">
          <option>MM</option>
        </select>
        <span className="absolute top-[11px] right-0 h-[8px] w-[12px] border-2 border-t-[#a5e8d4] border-r-[#27705e] border-b-[#27705e] border-l-[#a5e8d4]" />
      </div>
    </form>
  )
}

const taskIcons = {
  shell: (
    <g>
      <path d="M16 2c3-1 5 0 6 1 3 0 4 2 4 3 3 2 4 5 3 9-2 6-6 9-9 11v4h-8v-4C6 23 2 18 3 12c0-3 2-5 4-6 1-3 5-5 9-4z" fill="#f3cf85" />
      <path d="M16 26L6 9M16 26L11 4M16 26V3M16 26l5-21M16 26L27 9" stroke="#c99745" fill="none" />
      <path d="M18 10l2 6 6 0-4 4 2 7-6-4-6 4 2-7-5-4h7z" fill="#f08a24" stroke="#a85a10" />
    </g>
  ),
  doc: (
    <g>
      <rect x="5" y="2" width="22" height="28" fill="#f4fafc" />
      <path d="M8 6h16M8 10h16M8 14h16M8 18h16M8 22h16M8 26h16" stroke="#3f9fc0" strokeWidth="2" />
    </g>
  ),
  swirl: <path d="M29 1c0 5-3 7-12 7-5 1-7 6-6 10 1 5 6 7 9 4 1-2 1-4-1-4h-4v-4h13v7c-1 6-6 10-13 9C7 29 3 23 4 16 5 9 10 5 17 4c5 0 8-1 12-3z" fill="#cc1c14" />,
  floppy: (
    <g>
      <path d="M2 1h26l2 2v29H2z" fill="#2048c8" />
      <rect x="10" y="1" width="13" height="9" fill="#d8d8d8" /><rect x="17" y="2" width="4" height="7" fill="#2048c8" />
      <rect x="5" y="14" width="22" height="18" fill="#fff" />
      <path d="M6 18h20M6 22h20M6 26h10" stroke="#d05050" strokeWidth="1.500" />
      <text x="18" y="30" fontSize="8" fontFamily="Liberation Sans, sans-serif" fill="#222">64</text>
    </g>
  ),
  profile: <path d="M7 6C12 0 28 1 28 12c0 7-5 9-12 8l-2 3 1 9H7l-1-8 3-5-4-2 2-5z" fill="#148c3c" />,
  wing: (
    <g>
      <rect x="2" y="3" width="28" height="27" rx="5" fill="#1f8cf0" />
      <path d="M10 7c10 3 14 7 12 12h-2l1 2-5 7 1-5h-3l2-2c-4-3-6-8-6-14z" fill="#fff" />
    </g>
  ),
  word: (
    <g>
      <path d="M12 5h18v25H12z" fill="#f4f7fb" /><path d="M3 4l18-3v28L3 27z" fill="#e4ecf8" stroke="#2f5fb0" />
      <path d="M23 10h5M23 14h5M23 18h5M23 22h5M6 23h12" stroke="#2f5fb0" strokeWidth="2" />
      <text x="4" y="19" fontSize="15" fontWeight="bold" fontFamily="Liberation Sans, sans-serif" fill="#2450a0">W</text>
    </g>
  ),
  excel: (
    <g>
      <path d="M10 6h20v24H10z" fill="#f4fbf2" />
      <path d="M13 11h15M13 16h15M13 21h15M13 26h15M22 8v20M28 8v20" stroke="#4f9a3c" strokeWidth="2" />
      <path d="M3 4l17-3v26L3 25z" fill="#e2f2dc" stroke="#4f9a3c" />
      <text x="5" y="21" fontSize="18" fontWeight="bold" fontFamily="Liberation Sans, sans-serif" fill="#1f6a14">X</text>
    </g>
  ),
  disc: (
    <g>
      <path d="M3 4l8-2 7 4-6 5-9-3z" fill="#28b8b0" stroke="#084848" />
      <ellipse cx="19" cy="19" rx="12" ry="11" fill="#159a98" stroke="#063c3c" />
      <ellipse cx="19" cy="17" rx="8" ry="7" fill="#63e0d0" stroke="#0a5a5a" />
      <ellipse cx="19" cy="17" rx="4" ry="4" fill="#0f6f80" />
      <circle cx="19" cy="17" r="2" fill="#e8e070" />
      <path d="M9 25c5 6 13 7 19 0" stroke="#c8d04c" strokeWidth="1.500" fill="none" />
    </g>
  ),
  xlogo: (
    <g>
      <path d="M3 1h8l18 30h-8z" fill="#8c1490" stroke="#111" />
      <path d="M27 1L4 31" stroke="#111" strokeWidth="2" />
    </g>
  ),
}

const tasks = [
  ['shell', 'Shell'], ['doc', 'Notes'], ['swirl', 'Genesis'], ['floppy', 'Disk'], ['profile', 'Profile'], ['wing', 'Chat'],
  ['word', 'Word'], ['excel', 'Excel'], ['disc', 'Viewer'], ['xlogo', 'X server'], ['disc', 'Viewer 2'],
]

const Taskbar = () => (
  <footer className="flex h-10 shrink-0 items-stretch border-t border-[#5f7fa6] bg-linear-to-r from-[#0b2347] via-[#17406f] via-30% to-[#0a2a56] text-white">
    <button type="button" aria-label="Start" className="mr-[14px] ml-[9px] w-9">
      <svg viewBox="0 0 36 38" className="h-[38px] w-9">
        <circle cx="18" cy="19" r="17" fill="#2a5f92" stroke="#8fc0dd" />
        <path d="M3 13a16 14 0 0 1 30 0q-15 8-30 0z" fill="#9cc4e0" opacity="0.7" />
        <path d="M10 12q4-3 8 0l-2 7q-4-2-8 0z" fill="#f06a28" />
        <path d="M20 12q4 2 8-1l-2 8q-4 2-8 0z" fill="#8cc63c" />
        <path d="M8 21q4-3 8 0l-2 7q-4-2-8 0z" fill="#4f9ae8" />
        <path d="M18 21q4 3 8 0l-2 7q-4 3-8 0z" fill="#ffc828" />
      </svg>
    </button>
    <div className="flex gap-1">
      {tasks.map(([icon, name]) => (
        <button
          key={name}
          type="button"
          aria-label={name}
          className={`flex w-[58px] items-center justify-center rounded border border-[#8a9db8] ${
            icon === 'xlogo'
              ? 'bg-linear-to-b from-[#b9c4d4] to-[#8798b2]'
              : 'bg-linear-to-br from-[#7388a5] via-[#3c5678] to-[#243f66]'
          }`}
        >
          <svg viewBox="0 0 32 32" className="h-8 w-8">{taskIcons[icon]}</svg>
        </button>
      ))}
    </div>
    <div className="ml-auto flex items-center gap-2">
      <svg viewBox="0 0 150 24" className="h-6 w-[150px]">
        <rect x="2" y="9" width="14" height="9" rx="1" fill="#c8ccd2" />
        <path d="M4 12h10M4 15h10" stroke="#555" strokeDasharray="1 1" />
        <path d="M6 8q2-4 5-3t4-3" stroke="#ddd" fill="none" />
        <circle cx="32" cy="9" r="7" fill="#1c3cc8" stroke="#c8d4f0" />
        <text x="29" y="13" fontSize="11" fontWeight="bold" fontFamily="Liberation Sans, sans-serif" fill="#fff">?</text>
        <path d="M51 4h4v4h-4zM53 2h4v4" stroke="#fff" fill="none" />
        <path d="M51 14h5l-2 3zM70 15h7l-3.500-4z" fill="#fff" />
        <path d="M92 4v15" stroke="#fff" strokeWidth="2" /><path d="M93 5h8v7h-8z" fill="#e8e8e8" />
        <circle cx="101" cy="15" r="5" fill="#d02c20" /><path d="M99 13l4 4m0-4l-4 4" stroke="#fff" strokeWidth="1.500" />
        <path d="M115 9h3l4-4v14l-4-4h-3z" fill="#fff" />
        <path d="M124 9q2 3 0 6M127 7q4 5 0 10" stroke="#dde" fill="none" />
        <path d="M139 8h10v9h-10v-6M135 3v4q3 4 4 0V3M144 17v3m-4 0h8" stroke="#fff" fill="none" strokeWidth="1.500" />
      </svg>
      <time className="w-[78px] text-center font-['Open_Sans',sans-serif] text-xs leading-[18px]">
        20:39<br />2023/9/18
      </time>
      <button type="button" aria-label="Show desktop" className="-ml-2 mr-px h-full w-3 self-stretch border border-[#8a9db8] bg-[#3a5478]" />
    </div>
  </footer>
)

const App = () => (
  <div className="flex h-screen flex-col overflow-hidden bg-black">
    <div className="flex min-h-0 flex-1 flex-col bg-[#a5c4ee]">
      <TitleBar />
      <div className="flex min-h-0 flex-1 flex-col border-l border-[#3c5a7c]">
        <div className="ml-1 flex min-h-0 flex-1 flex-col border-l-3 border-[#2f4a5c]">
          <Header />
          <div className="flex min-h-0 flex-1">
            <LeftPanel />
            <Workspace />
            <RightPanel />
          </div>
          <CommandBar />
          <div className="h-[30px] shrink-0 border-t-2 border-b border-[#56787e] bg-[#b3ffff]">
            <p className="flex h-[25px] items-center justify-center border-t-3 border-b-2 border-t-[#d8ffff] border-b-[#5c9a9a] pl-[10px] font-['Liberation_Mono',monospace] text-xs font-bold text-black">
              mcdrl,#6,Line(.drill=plated),XS=28.9999425,YS=18.9999625,XE=28.9999425,YE=18.9999625,r2100,POS,Ang=0
            </p>
          </div>
        </div>
      </div>
      <div className="h-[9px] shrink-0 border-b-2 border-[#0c1a30] bg-linear-to-r from-[#a5c4ee] via-[#7fa8e0] to-[#6488bd]" />
    </div>
    <Taskbar />
  </div>
)

export default App
